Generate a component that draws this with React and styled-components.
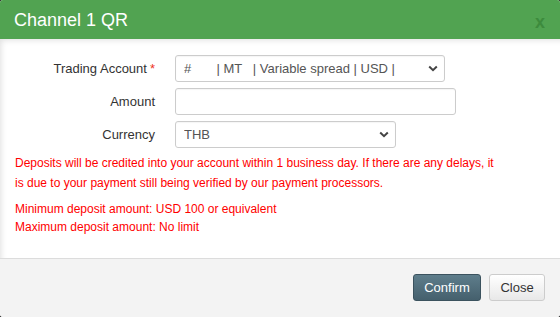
import React from 'react';
import styled, { createGlobalStyle } from 'styled-components';

// Global
const GlobalStyle = createGlobalStyle`
    html, body {
        margin:0;
        padding:0;
        background:#1e1e1e;
    }
    * {
        box-sizing:border-box;
    }
`

// Styles
const Modal = styled.div`
    width:560px;
    height:317px;
    display:flex;
    overflow:hidden;
    border-radius:3px;
    flex-direction:column;
    background-color:#fff;
    font-family:"Liberation Sans", Arial, sans-serif;
`

const Header = styled.div`
    height:39px;
    display:flex;
    flex-shrink:0;
    padding:0 15px 0 14px;
    align-items:center;
    justify-content:space-between;
    background-color:#51a351;
`

const Title = styled.h3`
    margin:0;
    color:#fff;
    font-size:18px;
    font-weight:400;
    line-height:20px;
`

const CloseX = styled.span`
    color:#3d8b3d;
    font-size:18px;
    font-weight:700;
    margin-top:4px;
    line-height:20px;
`

const Body = styled.div`
    flex:1;
    padding:16px 15px 0 15px;
    box-shadow:inset 5px 5px 6px -4px rgba(0,0,0,0.13);
`

const Form = styled.div`
    display:grid;
    row-gap:6px;
    column-gap:20px;
    align-items:center;
    grid-template-columns:140px 1fr;
`

const Label = styled.label`
    color:#333;
    font-size:13px;
    text-align:right;
`

const Required = styled.span`
    color:#e32;
    margin-left:3px;
`

const Field = styled.div`
    height:27px;
    display:flex;
    color:#555;
    font-size:13px;
    overflow:hidden;
    padding:0 6px 0 8px;
    align-items:center;
    border-radius:3px;
    background:#fff;
    border:1px solid #ccc;
    width:${({w}) => w}px;
    box-shadow:inset 0 1px 1px rgba(0,0,0,0.04);
`

const FieldText = styled.span`
    flex:1;
    overflow:hidden;
    white-space:pre;
`

const Chevron = styled.svg`
    width:10px;
    height:7px;
    flex-shrink:0;
    margin-left:4px;
`

const Notice = styled.p`
    margin:5px 0 0;
    color:#f00;
    font-size:12px;
    max-width:485px;
    line-height:20px;
`

const Limits = styled.p`
    margin:7px 0 0;
    color:#f00;
    font-size:12px;
    line-height:18px;
`

const Footer = styled.div`
    height:59px;
    gap:8px;
    display:flex;
    flex-shrink:0;
    padding:15px 15px 0;
    align-items:flex-start;
    justify-content:flex-end;
    background-color:#f3f3f3;
    border-top:1px solid #dcdcdc;
`

const Button = styled.button`
    height:27px;
    font-size:13px;
    cursor:pointer;
    padding:0 10px;
    border-radius:3px;
    font-family:inherit;
    color:${({primary}) => primary ? '#fff' : '#333'};
    border:1px solid ${({primary}) => primary ? '#3b525e' : '#ccc'};
    background:${({primary}) => primary
        ? 'linear-gradient(#5e7d8b, #45606d)'
        : 'linear-gradient(#fff, #e8e8e8)'};
    width:${({w}) => w}px;
`

const Arrow = () => (
    <Chevron viewBox="0 0 10 7">
        <path d="M1.2 1.5 L5 5.2 L8.8 1.5" fill="none" stroke="#444" strokeWidth="2"/>
    </Chevron>
)

// Main Function
export default function App() {
    return (
        <>
            <GlobalStyle/>
            <Modal>
                <Header>
                    <Title>Channel 1 QR</Title>
                    <CloseX>x</CloseX>
                </Header>
                <Body>
                    <Form>
                        <Label>Trading Account<Required>*</Required></Label>
                        <Field w={270}>
                            <FieldText>{'#       | MT   | Variable spread | USD |'}</FieldText>
                            <Arrow/>
                        </Field>
                        <Label>Amount</Label>
                        <Field w={281}/>
                        <Label>Currency</Label>
                        <Field w={221}>
                            <FieldText>THB</FieldText>
                            <Arrow/>
                        </Field>
                    </Form>
                    <Notice>
                        Deposits will be credited into your account within 1 business day. If there are any delays, it is due to your payment still being verified by our payment processors.
                    </Notice>
                    <Limits>
                        Minimum deposit amount: USD 100 or equivalent<br/>
                        Maximum deposit amount: No limit
                    </Limits>
                </Body>
                <Footer>
                    <Button primary w={68}>Confirm</Button>
                    <Button w={56}>Close</Button>
                </Footer>
            </Modal>
        </>
    )
}
